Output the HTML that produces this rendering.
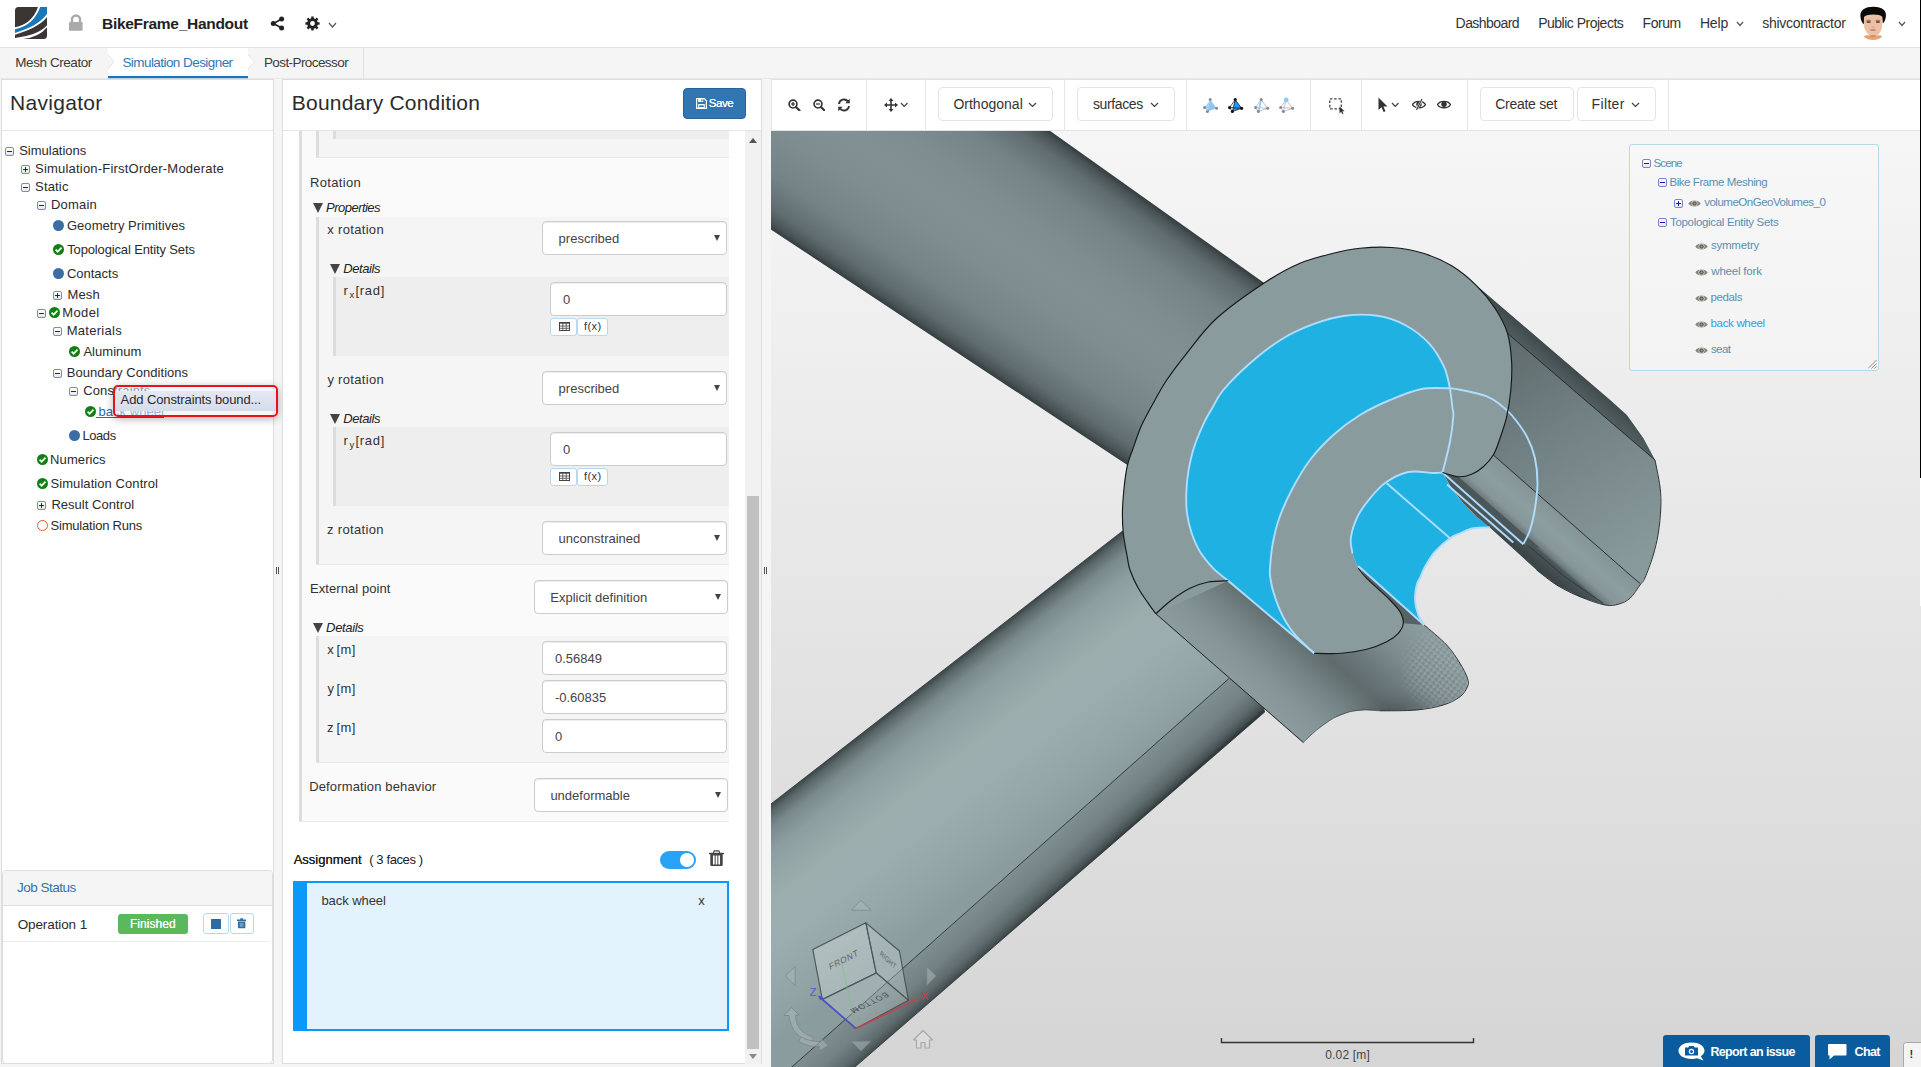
<!DOCTYPE html>
<html lang="en"><head><meta charset="utf-8"><title>BikeFrame_Handout - Simulation Designer</title>
<style>
*{box-sizing:border-box;margin:0;padding:0}
html,body{width:1921px;height:1067px;overflow:hidden;background:#f5f5f5;font-family:"Liberation Sans",sans-serif;font-size:13px;color:#333}
.t{position:absolute;white-space:nowrap;line-height:1;display:block}
.abs{position:absolute}
#top{position:absolute;left:0;top:0;width:1921px;height:48px;background:#fff;border-bottom:1px solid #e3e3e3}
#tabs{position:absolute;left:0;top:48px;width:1921px;height:31px;background:#f5f5f5;border-bottom:1px solid #e8e8e8}
.panel{position:absolute;background:#fff;border:1px solid #ddd}
.ex{position:absolute;width:9px;height:9px;border:1px solid #7f84c2;border-radius:2px;background:linear-gradient(#fff,#e6e6f4)}
.ex:before{content:"";position:absolute;left:1px;top:3px;width:5px;height:1.2px;background:#1515c8}
.ex.p:after{content:"";position:absolute;left:3px;top:1px;width:1.2px;height:5px;background:#1515c8}
.dot{position:absolute;width:11px;height:11px;border-radius:50%;background:#3a6ea5}
.ok{position:absolute;width:11px;height:11px}
.sel{position:absolute;height:34px;border:1px solid #ccc;border-radius:4px;background:#fff;box-shadow:inset 0 1px 1px rgba(0,0,0,.075)}
.sel:after{content:"";position:absolute;right:6px;top:13px;border:3.5px solid transparent;border-top:6px solid #444;border-bottom:0}
.inp{position:absolute;height:34px;border:1px solid #ccc;border-radius:4px;background:#fff;box-shadow:inset 0 1px 1px rgba(0,0,0,.075)}
.blk{position:absolute;border-left:3px solid #ddd}
.sbtn{position:absolute;height:18px;border:1px solid #b9d8ee;border-radius:3px;background:#fff}
.tri{position:absolute;width:0;height:0;border:5.7px solid transparent;border-top:10.3px solid #444;border-bottom:0}
.tbtn{position:absolute;top:87px;height:34px;border:1px solid #e4e4e4;border-radius:4px;background:#fff}
.vsep{position:absolute;top:79px;width:1px;height:52px;background:#e6e6e6}
</style></head>
<body>
<div id="top">
<svg class="abs" style="left:15px;top:6.8px" width="32" height="32" viewBox="0 0 32 32"><defs><clipPath id="lc"><path d="M3.5 0H32V28.5Q32 32 28.5 32H0V3.5Q0 0 3.5 0Z"/></clipPath></defs><g clip-path="url(#lc)"><rect width="32" height="32" fill="#3b3633"/><path d="M0 20.3Q17 17 23 0H32V10.1Q24 20.7 0 27.7Z" fill="#fff"/><path d="M0 22.3Q18.5 18.5 25.2 0H32V6.8Q24 18.8 0 25.9Z" fill="#1779ba"/><path d="M0 31Q24 27.6 32 18.2V20.3Q24 30.4 7.9 32H0Z" fill="#fff"/></g></svg>
<svg class="abs" style="left:68px;top:14px" width="16" height="18" viewBox="0 0 16 18"><path d="M4 8V5.5a4 4 0 0 1 8 0V8" fill="none" stroke="#aaa" stroke-width="2.4"/><rect x="1" y="8" width="13.6" height="8.8" rx=".8" fill="#aaa"/></svg>
<span class="t" style="left:102px;top:15.9px;font-size:15.5px;letter-spacing:-0.29px;color:#222;font-weight:bold;">BikeFrame_Handout</span>
<svg class="abs" style="left:270px;top:16px" width="15" height="15" viewBox="0 0 15 15"><path d="M11.5 3L3.5 7.5L11.5 12" fill="none" stroke="#222" stroke-width="1.6"/><circle cx="11.6" cy="3" r="2.5" fill="#222"/><circle cx="3.3" cy="7.5" r="2.5" fill="#222"/><circle cx="11.6" cy="12" r="2.5" fill="#222"/></svg>
<svg class="abs" style="left:305px;top:16px" width="15" height="15" viewBox="0 0 15 15"><path fill-rule="evenodd" d="M14.59 6.26L14.59 8.74L12.75 8.76L12.1 10.32L13.39 11.64L11.64 13.39L10.32 12.1L8.76 12.75L8.74 14.59L6.26 14.59L6.24 12.75L4.68 12.1L3.36 13.39L1.61 11.64L2.9 10.32L2.25 8.76L0.41 8.74L0.41 6.26L2.25 6.24L2.9 4.68L1.61 3.36L3.36 1.61L4.68 2.9L6.24 2.25L6.26 0.41L8.74 0.41L8.76 2.25L10.32 2.9L11.64 1.61L13.39 3.36L12.1 4.68L12.75 6.24ZM9.9 7.5A2.4 2.4 0 1 0 5.1 7.5A2.4 2.4 0 1 0 9.9 7.5Z" fill="#222"/></svg>
<svg class="abs" style="left:327.5px;top:21.5px" width="9" height="6" viewBox="-1 -1 9 6"><path d="M0 0L3.5 4L7 0" fill="none" stroke="#555" stroke-width="1.2"/></svg><span class="t" style="left:1455.6px;top:16.4px;font-size:14px;letter-spacing:-0.56px;color:#333;">Dashboard</span>
<span class="t" style="left:1538.2px;top:16.4px;font-size:14px;letter-spacing:-0.5px;color:#333;">Public Projects</span>
<span class="t" style="left:1642.6px;top:16.4px;font-size:14px;letter-spacing:-0.44px;color:#333;">Forum</span>
<span class="t" style="left:1699.9px;top:16.4px;font-size:14px;letter-spacing:-0.14px;color:#333;">Help</span>
<span class="t" style="left:1762.3px;top:16.4px;font-size:14px;letter-spacing:-0.28px;color:#333;">shivcontractor</span>
<svg class="abs" style="left:1736px;top:21px" width="8" height="5.5" viewBox="-1 -1 8 5.5"><path d="M0 0L3 3.5L6 0" fill="none" stroke="#555" stroke-width="1.2"/></svg><svg class="abs" style="left:1898px;top:21px" width="8" height="5.5" viewBox="-1 -1 8 5.5"><path d="M0 0L3 3.5L6 0" fill="none" stroke="#555" stroke-width="1.2"/></svg><svg class="abs" style="left:1850px;top:0" width="50" height="47" viewBox="0 0 50 47"><path d="M13.5 36.2C16 35.2 18 35 23 35.5C28 35 30 35.2 32.3 36.2C30 39 26 40 23 40C20 40 16 39 13.5 36.2Z" fill="#e9a070"/><path d="M13.8 16C15 12.5 31 12.5 32.4 16L32 27C31.5 31.5 28.5 35.8 23.3 37.2C18.5 35.8 15 31.5 14.2 27Z" fill="#ecc0a5"/><path d="M10.5 17C9.5 10 15 6.8 23.5 6.8C32 6.8 37 10.5 35.8 17C35.5 20 34 22.5 32.8 23.5L32.3 17C30 13.8 17 13.8 14 17L13.8 24.5C12 22.5 10.8 20 10.5 17Z" fill="#0c0a09"/><ellipse cx="18.6" cy="21.9" rx="2.3" ry="1" fill="#6a4a40"/><ellipse cx="27.9" cy="21.9" rx="2.3" ry="1" fill="#6a4a40"/><path d="M16.3 20.3H20.8M25.7 20.3H30.2" stroke="#7a5a4c" stroke-width=".7"/><ellipse cx="23" cy="27" rx="1.8" ry=".7" fill="#d7a68a"/><ellipse cx="22.9" cy="30" rx="3.2" ry=".9" fill="#c88a74"/><ellipse cx="23" cy="36" rx="3" ry="1" fill="#c98a64"/></svg>
<i class="abs" style="left:1920px;top:0;width:1px;height:48px;background:#000"></i></div>
<div id="tabs">
<svg class="abs" style="left:0;top:0" width="380" height="31" viewBox="0 0 380 31"><rect x="108" y="0" width="140" height="30" fill="#fff"/><path d="M107.5 7L114 13.8L107.5 21Z" fill="#f5f5f5"/><path d="M108 7L114 13.8L108 21" fill="none" stroke="#e6e6e6"/><path d="M247.5 7L254.5 13.8L247.5 21Z" fill="#fff"/><path d="M248 7L254.5 13.8L248 21" fill="none" stroke="#e6e6e6"/><rect x="108" y="28" width="140" height="2.2" fill="#1b75b6"/><rect x="363" y="0" width="1" height="30" fill="#e1e1e1"/></svg>
<span class="t" style="left:15.3px;top:7.6px;font-size:13.5px;letter-spacing:-0.43px;color:#3a3a3a;">Mesh Creator</span><span class="t" style="left:122.4px;top:7.6px;font-size:13.5px;letter-spacing:-0.56px;color:#2f78b4;">Simulation Designer</span><span class="t" style="left:263.9px;top:7.6px;font-size:13.5px;letter-spacing:-0.58px;color:#3a3a3a;">Post-Processor</span><i class="abs" style="left:1920px;top:0;width:1px;height:31px;background:#000"></i></div>
<div class="panel" style="left:1px;top:79px;width:273px;height:985px;border-color:#ddd"></div>
<div class="abs" style="left:2px;top:130px;width:271px;height:1px;background:#e5e5e5"></div>
<span class="t" style="left:9.9px;top:92px;font-size:21px;letter-spacing:0.32px;color:#2b2b2b;">Navigator</span>
<i class="ex" style="left:5px;top:147.1px"></i><span class="t" style="left:19.2px;top:143.9px;font-size:13px;letter-spacing:-0.01px;color:#2b2b2b;">Simulations</span>
<i class="ex p" style="left:21px;top:165.1px"></i><span class="t" style="left:35.1px;top:161.9px;font-size:13px;letter-spacing:0.2px;color:#2b2b2b;">Simulation-FirstOrder-Moderate</span>
<i class="ex" style="left:21px;top:183.1px"></i><span class="t" style="left:35.1px;top:179.9px;font-size:13px;letter-spacing:0.16px;color:#2b2b2b;">Static</span>
<i class="ex" style="left:37px;top:201.1px"></i><span class="t" style="left:51px;top:197.9px;font-size:13px;letter-spacing:0.2px;color:#2b2b2b;">Domain</span>
<i class="dot" style="left:53px;top:219.7px;background:#3a6ea5"></i><span class="t" style="left:66.9px;top:218.8px;font-size:13px;letter-spacing:0.06px;color:#2b2b2b;">Geometry Primitives</span>
<svg class="ok" style="left:53px;top:243.9px" viewBox="0 0 11 11"><circle cx="5.5" cy="5.5" r="5.5" fill="#127f12"/><path d="M2.6 5.7L4.7 7.7L8.5 3.7" fill="none" stroke="#fff" stroke-width="1.7"/></svg><span class="t" style="left:67.2px;top:243px;font-size:13px;letter-spacing:-0.14px;color:#2b2b2b;">Topological Entity Sets</span>
<i class="dot" style="left:53px;top:267.8px;background:#3a6ea5"></i><span class="t" style="left:66.9px;top:266.9px;font-size:13px;letter-spacing:-0px;color:#2b2b2b;">Contacts</span>
<i class="ex p" style="left:53px;top:291px"></i><span class="t" style="left:67.5px;top:287.8px;font-size:13px;letter-spacing:0.11px;color:#2b2b2b;">Mesh</span>
<i class="ex" style="left:37px;top:309.1px"></i><svg class="ok" style="left:49px;top:306.8px" viewBox="0 0 11 11"><circle cx="5.5" cy="5.5" r="5.5" fill="#127f12"/><path d="M2.6 5.7L4.7 7.7L8.5 3.7" fill="none" stroke="#fff" stroke-width="1.7"/></svg><span class="t" style="left:62.2px;top:305.9px;font-size:13px;letter-spacing:0.4px;color:#2b2b2b;">Model</span>
<i class="ex" style="left:53px;top:327.1px"></i><span class="t" style="left:66.7px;top:323.9px;font-size:13px;letter-spacing:0.28px;color:#2b2b2b;">Materials</span>
<svg class="ok" style="left:69px;top:345.7px" viewBox="0 0 11 11"><circle cx="5.5" cy="5.5" r="5.5" fill="#127f12"/><path d="M2.6 5.7L4.7 7.7L8.5 3.7" fill="none" stroke="#fff" stroke-width="1.7"/></svg><span class="t" style="left:83.4px;top:344.8px;font-size:13px;letter-spacing:0.03px;color:#2b2b2b;">Aluminum</span>
<i class="ex" style="left:53px;top:369px"></i><span class="t" style="left:66.7px;top:365.8px;font-size:13px;letter-spacing:0.04px;color:#2b2b2b;">Boundary Conditions</span>
<i class="ex" style="left:69px;top:387px"></i><span class="t" style="left:83.2px;top:383.8px;font-size:13px;letter-spacing:0.14px;color:#2b2b2b;">Constraints</span>
<svg class="ok" style="left:85px;top:405.5px" viewBox="0 0 11 11"><circle cx="5.5" cy="5.5" r="5.5" fill="#127f12"/><path d="M2.6 5.7L4.7 7.7L8.5 3.7" fill="none" stroke="#fff" stroke-width="1.7"/></svg><span class="t" style="left:98.5px;top:404.6px;font-size:13px;letter-spacing:0.05px;color:#2a6cae;">back wheel</span><div class="abs" style="left:96px;top:417.1px;width:67.5px;height:1px;background:#2a6cae"></div>
<i class="dot" style="left:69px;top:429.8px;background:#3a6ea5"></i><span class="t" style="left:82.5px;top:428.9px;font-size:13px;letter-spacing:-0.44px;color:#2b2b2b;">Loads</span>
<svg class="ok" style="left:37px;top:453.7px" viewBox="0 0 11 11"><circle cx="5.5" cy="5.5" r="5.5" fill="#127f12"/><path d="M2.6 5.7L4.7 7.7L8.5 3.7" fill="none" stroke="#fff" stroke-width="1.7"/></svg><span class="t" style="left:50.1px;top:452.8px;font-size:13px;letter-spacing:0.09px;color:#2b2b2b;">Numerics</span>
<svg class="ok" style="left:37px;top:477.7px" viewBox="0 0 11 11"><circle cx="5.5" cy="5.5" r="5.5" fill="#127f12"/><path d="M2.6 5.7L4.7 7.7L8.5 3.7" fill="none" stroke="#fff" stroke-width="1.7"/></svg><span class="t" style="left:50.5px;top:476.8px;font-size:13px;letter-spacing:0.07px;color:#2b2b2b;">Simulation Control</span>
<i class="ex p" style="left:37px;top:501px"></i><span class="t" style="left:51.4px;top:497.8px;font-size:13px;letter-spacing:0.03px;color:#2b2b2b;">Result Control</span>
<i class="dot" style="left:37px;top:519.7px;background:#fff;border:1.8px solid #dd5a26"></i><span class="t" style="left:50.5px;top:518.8px;font-size:13px;letter-spacing:-0.2px;color:#2b2b2b;">Simulation Runs</span>
<div class="abs" style="left:113px;top:384.5px;width:165px;height:32.5px;border:2px solid #e8121c;border-radius:5px;background:rgba(236,236,240,.55);box-shadow:0 2px 8px rgba(0,0,0,.3)"><div class="abs" style="left:0;top:4.5px;width:161px;height:19.5px;background:linear-gradient(#e4e8f4,#d7dceb)"></div></div>
<span class="t" style="left:120.6px;top:393.4px;font-size:13px;letter-spacing:-0.11px;color:#2b2b2b;">Add Constraints bound...</span>
<div class="abs" style="left:275.5px;top:567px;width:1px;height:7px;background:#555"></div><div class="abs" style="left:277.5px;top:567px;width:1px;height:7px;background:#555"></div>
<div class="abs" style="left:763.5px;top:567px;width:1px;height:7px;background:#555"></div><div class="abs" style="left:765.5px;top:567px;width:1px;height:7px;background:#555"></div>
<div class="abs" style="left:1.5px;top:869.5px;width:271.5px;height:194px;border:1px solid #ddd;border-radius:4px;background:#fff"><div style="height:35px;background:#f5f5f5;border-bottom:1px solid #ddd;border-radius:3px 3px 0 0"></div><div class="abs" style="left:0;top:37px;width:267px;height:34px;border-bottom:1px solid #eee"></div></div>
<span class="t" style="left:17.1px;top:881.1px;font-size:13.5px;letter-spacing:-0.51px;color:#3470a8;">Job Status</span>
<span class="t" style="left:17.7px;top:917.6px;font-size:13.5px;letter-spacing:-0.11px;color:#2b2b2b;">Operation 1</span>
<div class="abs" style="left:118px;top:914px;width:70px;height:20px;border-radius:3px;background:#5cb85c"></div><span class="t" style="left:130px;top:918px;font-size:12px;letter-spacing:0.04px;color:#fff;text-shadow:0 0 .5px #fff">Finished</span>
<div class="sbtn" style="left:203px;top:913px;width:25.5px;height:21px"><i class="abs" style="left:7px;top:4.5px;width:10px;height:10px;background:#2e6da4"></i></div><div class="sbtn" style="left:229.5px;top:913px;width:24.5px;height:21px"><svg class="abs" style="left:6.5px;top:4px" width="9.3" height="10.5" viewBox="0 0 10 11"><path d="M0 1.5H10V3H0ZM3.5 0H6.5V1.5H3.5ZM1 3.5H9V10.2Q9 11 8.2 11H1.8Q1 11 1 10.2Z" fill="#2e6da4"/><path d="M3.5 5V9.5M5 5V9.5M6.5 5V9.5" stroke="#9ec0df" stroke-width=".8"/></svg></div>
<div class="panel" style="left:282px;top:79px;width:480px;height:985px"></div>
<div class="abs" style="left:283px;top:130px;width:478px;height:1px;background:#e5e5e5"></div>
<span class="t" style="left:291.8px;top:92px;font-size:21px;letter-spacing:0.21px;color:#2b2b2b;">Boundary Condition</span>
<div class="abs" style="left:683px;top:88px;width:63px;height:31px;border-radius:4px;background:#3276b1;border:1px solid #2a6496"></div><svg class="abs" style="left:696px;top:98px" width="11" height="11" viewBox="0 0 11 11"><path d="M.6 .6H8.2L10.4 2.8V10.4H.6Z" fill="#3276b1" stroke="#fff" stroke-width="1.2"/><rect x="2.2" y="1" width="5" height="3" fill="#fff"/><rect x="5.2" y="1.4" width="1.2" height="2" fill="#3276b1"/><rect x="2.2" y="6" width="6.6" height="4" fill="#fff"/><rect x="3.2" y="7.4" width="4.6" height="1.6" fill="#3276b1"/></svg><span class="t" style="left:708.8px;top:98.1px;font-size:11.5px;letter-spacing:-0.42px;color:#fff;text-shadow:0 0 .4px #fff">Save</span>
<div class="abs" style="left:283px;top:131px;width:461px;height:933px;overflow:hidden">
<div class="abs" style="left:16px;top:0px;width:429.5px;height:690.5px;background:#fafafa;border-left:3px solid #ddd;border-bottom:1px solid #eaeaea"></div><div class="abs" style="left:33px;top:0px;width:412.5px;height:27px;background:#f5f5f5;border-left:3px solid #ddd;border-bottom:1px solid #e8e8e8"></div><div class="abs" style="left:50px;top:0px;width:395.5px;height:8px;background:#eee;border-left:3px solid #ddd"></div><div class="abs" style="left:33px;top:85.5px;width:412.5px;height:348px;background:#f5f5f5;border-left:3px solid #ddd;border-bottom:1px solid #e8e8e8"></div><div class="abs" style="left:50px;top:146px;width:395.5px;height:78.5px;background:#eee;border-left:3px solid #ddd"></div><div class="abs" style="left:50px;top:296px;width:395.5px;height:78.5px;background:#eee;border-left:3px solid #ddd"></div><div class="abs" style="left:33px;top:504.5px;width:412.5px;height:127px;background:#f5f5f5;border-left:3px solid #ddd;border-bottom:1px solid #e8e8e8"></div></div>
<span class="t" style="left:309.9px;top:176.3px;font-size:13px;letter-spacing:0.35px;color:#333;">Rotation</span><i class="tri" style="left:313px;top:203px"></i><span class="t" style="left:326.1px;top:201px;font-size:13px;letter-spacing:-0.53px;color:#222;font-style:italic;">Properties</span>
<span class="t" style="left:327.3px;top:222.5px;font-size:13px;letter-spacing:0.32px;color:#333;">x rotation</span><div class="sel" style="left:542px;top:221px;width:185px"></div><span class="t" style="left:558.6px;top:232.4px;font-size:13px;color:#444;">prescribed</span>
<i class="tri" style="left:330px;top:264px"></i><span class="t" style="left:343.2px;top:261.8px;font-size:13px;letter-spacing:-0.39px;color:#222;font-style:italic;">Details</span><span class="t" style="left:343.6px;top:284.3px;font-size:13px;color:#333;">r</span><span class="t" style="left:349.5px;top:290.3px;font-size:9.5px;color:#333;">x</span><span class="t" style="left:355.6px;top:284.3px;font-size:13px;letter-spacing:0.66px;color:#333;">[rad]</span><div class="inp" style="left:549.5px;top:282px;width:177px"></div><span class="t" style="left:562.9px;top:293.4px;font-size:13px;color:#444;">0</span><div class="sbtn" style="left:550px;top:318px;width:26.5px"><svg class="abs" style="left:7.5px;top:3px" width="11" height="9" viewBox="0 0 11 9"><rect x=".5" y=".5" width="10" height="8" fill="#fff" stroke="#444"/><path d="M.5 1.2H10.5" stroke="#444" stroke-width="1"/><path d="M.5 4H10.5M.5 6.3H10.5M3.8 1V8.5M7.2 1V8.5" stroke="#444" stroke-width=".8"/></svg></div><div class="sbtn" style="left:577px;top:318px;width:30.5px"></div><span class="t" style="left:583.9px;top:321.3px;font-size:11px;letter-spacing:0.46px;color:#333;">f(x)</span>
<span class="t" style="left:327.4px;top:372.5px;font-size:13px;letter-spacing:0.31px;color:#333;">y rotation</span><div class="sel" style="left:542px;top:371px;width:185px"></div><span class="t" style="left:558.6px;top:382.4px;font-size:13px;color:#444;">prescribed</span>
<i class="tri" style="left:330px;top:414px"></i><span class="t" style="left:343.2px;top:411.8px;font-size:13px;letter-spacing:-0.39px;color:#222;font-style:italic;">Details</span><span class="t" style="left:343.6px;top:434.3px;font-size:13px;color:#333;">r</span><span class="t" style="left:349.6px;top:440.3px;font-size:9.5px;color:#333;">y</span><span class="t" style="left:355.6px;top:434.3px;font-size:13px;letter-spacing:0.66px;color:#333;">[rad]</span><div class="inp" style="left:549.5px;top:432px;width:177px"></div><span class="t" style="left:562.9px;top:443.4px;font-size:13px;color:#444;">0</span><div class="sbtn" style="left:550px;top:468px;width:26.5px"><svg class="abs" style="left:7.5px;top:3px" width="11" height="9" viewBox="0 0 11 9"><rect x=".5" y=".5" width="10" height="8" fill="#fff" stroke="#444"/><path d="M.5 1.2H10.5" stroke="#444" stroke-width="1"/><path d="M.5 4H10.5M.5 6.3H10.5M3.8 1V8.5M7.2 1V8.5" stroke="#444" stroke-width=".8"/></svg></div><div class="sbtn" style="left:577px;top:468px;width:30.5px"></div><span class="t" style="left:583.9px;top:471.3px;font-size:11px;letter-spacing:0.46px;color:#333;">f(x)</span>
<span class="t" style="left:326.9px;top:522.5px;font-size:13px;letter-spacing:0.36px;color:#333;">z rotation</span><div class="sel" style="left:542px;top:521px;width:185px"></div><span class="t" style="left:558.6px;top:532.4px;font-size:13px;color:#444;">unconstrained</span>
<span class="t" style="left:309.9px;top:582px;font-size:13px;letter-spacing:0.08px;color:#333;">External point</span><div class="sel" style="left:534px;top:580px;width:194px"></div><span class="t" style="left:550.3px;top:591.4px;font-size:13px;color:#444;">Explicit definition</span>
<i class="tri" style="left:313px;top:622.5px"></i><span class="t" style="left:326.1px;top:620.9px;font-size:13px;letter-spacing:-0.35px;color:#222;font-style:italic;">Details</span>
<span class="t" style="left:327.3px;top:642.5px;font-size:13px;color:#333;">x</span><span class="t" style="left:336.6px;top:642.5px;font-size:13px;letter-spacing:0.31px;color:#333;">[m]</span><div class="inp" style="left:542px;top:641px;width:185px"></div><span class="t" style="left:555px;top:652.4px;font-size:13px;color:#444;">0.56849</span>
<span class="t" style="left:327.4px;top:681.5px;font-size:13px;color:#333;">y</span><span class="t" style="left:336.6px;top:681.5px;font-size:13px;letter-spacing:0.31px;color:#333;">[m]</span><div class="inp" style="left:542px;top:680px;width:185px"></div><span class="t" style="left:554.9px;top:691.4px;font-size:13px;color:#444;">-0.60835</span>
<span class="t" style="left:326.9px;top:720.5px;font-size:13px;color:#333;">z</span><span class="t" style="left:336.6px;top:720.5px;font-size:13px;letter-spacing:0.31px;color:#333;">[m]</span><div class="inp" style="left:542px;top:719px;width:185px"></div><span class="t" style="left:555px;top:730.4px;font-size:13px;color:#444;">0</span>
<span class="t" style="left:309.2px;top:779.9px;font-size:13px;letter-spacing:0.14px;color:#333;">Deformation behavior</span><div class="sel" style="left:534px;top:778px;width:194px"></div><span class="t" style="left:550.4px;top:789.4px;font-size:13px;color:#444;">undeformable</span>
<span class="t" style="left:293.7px;top:853px;font-size:13px;letter-spacing:-0.01px;color:#222;text-shadow:0 0 .6px #222">Assignment</span><span class="t" style="left:369.2px;top:853px;font-size:13px;letter-spacing:-0.39px;color:#222;">( 3 faces )</span>
<div class="abs" style="left:659.5px;top:850.5px;width:36.5px;height:18.5px;border-radius:10px;background:#2aa2f6"><i class="abs" style="left:20.5px;top:2.5px;width:13.5px;height:13.5px;border-radius:50%;background:#fff"></i></div><svg class="abs" style="left:709px;top:850px" width="15" height="17" viewBox="0 0 15 17"><path d="M4.2 3.4L5.2 .8H9.8L10.8 3.4" fill="none" stroke="#444" stroke-width="1.2"/><rect x="0" y="2.8" width="15" height="1.4" fill="#444"/><path d="M1.3 4.1H13.7V15Q13.7 16 12.7 16H2.3Q1.3 16 1.3 15Z" fill="#444"/><path d="M4.8 5.4V14.5M7.5 5.4V14.5M10.2 5.4V14.5" stroke="#fff" stroke-width="1.7"/></svg>
<div class="abs" style="left:293px;top:881px;width:436px;height:149.5px;border:2px solid #0a98fa;border-left-width:14px;background:#e3f3fd"></div><span class="t" style="left:321.4px;top:893.7px;font-size:13px;letter-spacing:-0.06px;color:#333;">back wheel</span><span class="t" style="left:698.3px;top:893.7px;font-size:13px;color:#333;">x</span>
<div class="abs" style="left:744.5px;top:131px;width:16.5px;height:933px;background:#f1f1f1"></div><div class="abs" style="left:746.5px;top:496px;width:12.5px;height:552.5px;background:#c1c1c1"></div><i class="abs" style="left:748.5px;top:138px;border:4px solid transparent;border-bottom:5px solid #555;border-top:0"></i><i class="abs" style="left:748.5px;top:1054px;border:4px solid transparent;border-top:5px solid #8a8a8a;border-bottom:0"></i>
<div class="abs" style="left:770.5px;top:78.5px;width:1151px;height:52.5px;background:#fff;border:1px solid #e3e3e3;border-right:0"></div><i class="abs" style="left:1920px;top:79px;width:1px;height:52px;background:#000"></i>
<svg class="abs" style="left:788px;top:98.5px" width="12.5" height="12.5" viewBox="0 0 13 13"><circle cx="5.2" cy="5.2" r="4.1" fill="none" stroke="#333" stroke-width="1.7"/><path d="M8.3 8.3L12 12" stroke="#333" stroke-width="2.2" stroke-linecap="round"/><path d="M3.2 5.2H7.2" stroke="#333" stroke-width="1.3"/><path d="M5.2 3.2V7.2" stroke="#333" stroke-width="1.3"/></svg><svg class="abs" style="left:812.5px;top:98.5px" width="12.5" height="12.5" viewBox="0 0 13 13"><circle cx="5.2" cy="5.2" r="4.1" fill="none" stroke="#333" stroke-width="1.7"/><path d="M8.3 8.3L12 12" stroke="#333" stroke-width="2.2" stroke-linecap="round"/><path d="M3.2 5.2H7.2" stroke="#333" stroke-width="1.3"/></svg><svg class="abs" style="left:836.5px;top:98px" width="14" height="14" viewBox="0 0 14 14"><path d="M2 6A5 5 0 0 1 11 3.5" fill="none" stroke="#333" stroke-width="1.9"/><path d="M12.8 .8V5.3H8.3Z" fill="#333"/><path d="M12 8A5 5 0 0 1 3 10.5" fill="none" stroke="#333" stroke-width="1.9"/><path d="M1.2 13.2V8.7H5.7Z" fill="#333"/></svg>
<i class="vsep" style="left:866px"></i><i class="vsep" style="left:925px"></i><i class="vsep" style="left:1064px"></i><i class="vsep" style="left:1186px"></i><i class="vsep" style="left:1310px"></i><i class="vsep" style="left:1361px"></i><i class="vsep" style="left:1467px"></i><i class="vsep" style="left:1668px"></i><svg class="abs" style="left:883.5px;top:98px" width="14" height="14" viewBox="0 0 14 14"><path d="M7 0L9.5 3H7.8V6.2H11V4.5L14 7L11 9.5V7.8H7.8V11H9.5L7 14L4.5 11H6.2V7.8H3V9.5L0 7L3 4.5V6.2H6.2V3H4.5Z" fill="#333"/></svg><svg class="abs" style="left:900px;top:101.5px" width="8.5" height="5.5" viewBox="-1 -1 8.5 5.5"><path d="M0 0L3.25 3.5L6.5 0" fill="none" stroke="#444" stroke-width="1.2"/></svg>
<div class="tbtn" style="left:938px;width:114.5px"></div><span class="t" style="left:953.4px;top:97.4px;font-size:14px;letter-spacing:0.01px;color:#333;">Orthogonal</span><svg class="abs" style="left:1028px;top:101.5px" width="9" height="5.5" viewBox="-1 -1 9 5.5"><path d="M0 0L3.5 3.5L7 0" fill="none" stroke="#444" stroke-width="1.2"/></svg>
<div class="tbtn" style="left:1077px;width:97.5px"></div><span class="t" style="left:1092.9px;top:97.4px;font-size:14px;letter-spacing:-0.37px;color:#333;">surfaces</span><svg class="abs" style="left:1149.5px;top:101.5px" width="9" height="5.5" viewBox="-1 -1 9 5.5"><path d="M0 0L3.5 3.5L7 0" fill="none" stroke="#444" stroke-width="1.2"/></svg>
<svg class="abs" style="left:1202px;top:96px" width="17" height="18" viewBox="-2 -2 17 18"><path d="M6.2 1.6L0.6 9.6L3.4 13.5Z" fill="#a8d4f5"/><path d="M6.2 1.6L3.4 13.5L12.6 10.3Z" fill="#8cc6f2"/><path d="M0.6 9.6L12.6 10.3" stroke="#b5b5b5" stroke-width=".6" stroke-dasharray="1 1"/><circle cx="6.2" cy="1.6" r="1.5" fill="#8a8a8a"/><circle cx="0.6" cy="9.6" r="1.5" fill="#8a8a8a"/><circle cx="12.6" cy="10.3" r="1.5" fill="#8a8a8a"/><circle cx="3.4" cy="13.5" r="1.5" fill="#8a8a8a"/></svg><svg class="abs" style="left:1227px;top:96px" width="17" height="18" viewBox="-2 -2 17 18"><path d="M6.2 1.6L3.4 13.5L12.6 10.3Z" fill="#2196f3"/><path d="M6.2 1.6L0.6 9.6L3.4 13.5L12.6 10.3L6.2 1.6L3.4 13.5M0.6 9.6L12.6 10.3" fill="none" stroke="#111" stroke-width=".7"/><circle cx="6.2" cy="1.6" r="1.6" fill="#111"/><circle cx="0.6" cy="9.6" r="1.6" fill="#111"/><circle cx="12.6" cy="10.3" r="1.6" fill="#111"/><circle cx="3.4" cy="13.5" r="1.6" fill="#111"/></svg><svg class="abs" style="left:1253px;top:96px" width="17" height="18" viewBox="-2 -2 17 18"><path d="M6.2 1.6L0.6 9.6L3.4 13.5L12.6 10.3L6.2 1.6M0.6 9.6L12.6 10.3" fill="none" stroke="#999" stroke-width=".6"/><path d="M6.2 1.6L3.4 13.5" stroke="#90caf9" stroke-width="1.8"/><circle cx="6.2" cy="1.6" r="1.5" fill="#8a8a8a"/><circle cx="0.6" cy="9.6" r="1.5" fill="#8a8a8a"/><circle cx="12.6" cy="10.3" r="1.5" fill="#8a8a8a"/><circle cx="3.4" cy="13.5" r="1.5" fill="#8a8a8a"/></svg><svg class="abs" style="left:1278px;top:96px" width="17" height="18" viewBox="-2 -2 17 18"><path d="M6.2 1.6L0.6 9.6L3.4 13.5L12.6 10.3L6.2 1.6L3.4 13.5M0.6 9.6L12.6 10.3" fill="none" stroke="#999" stroke-width=".6"/><circle cx="0.6" cy="9.6" r="1.5" fill="#8a8a8a"/><circle cx="12.6" cy="10.3" r="1.5" fill="#8a8a8a"/><circle cx="3.4" cy="13.5" r="1.5" fill="#8a8a8a"/><circle cx="6.2" cy="2" r="2.4" fill="#90caf9"/></svg>
<svg class="abs" style="left:1328.5px;top:98px" width="17" height="17" viewBox="0 0 17 17"><rect x=".8" y=".8" width="11.5" height="10" fill="none" stroke="#444" stroke-width="1.3" stroke-dasharray="2.6 1.7"/><path d="M10.5 8.5V15.5L12.2 13.8L13.3 16.3L14.4 15.8L13.3 13.3H15.6Z" fill="#333"/></svg>
<svg class="abs" style="left:1378px;top:96.5px" width="10" height="16" viewBox="0 0 10 16"><path d="M.5 .5V13L3.5 10.2L5.6 15L7.5 14.2L5.4 9.5H9.5Z" fill="#333"/></svg><svg class="abs" style="left:1391px;top:101.5px" width="8.5" height="5.5" viewBox="-1 -1 8.5 5.5"><path d="M0 0L3.25 3.5L6.5 0" fill="none" stroke="#444" stroke-width="1.2"/></svg><svg class="abs" style="left:1411.5px;top:99px" width="14" height="11" viewBox="0 0 14 11"><path d="M.5 5.5C3 1.2 11 1.2 13.5 5.5C11 9.8 3 9.8 .5 5.5Z" fill="none" stroke="#333" stroke-width="1.3"/><circle cx="7" cy="5.2" r="2.7" fill="#333"/><path d="M10.5 -.5L4 11.5" stroke="#fff" stroke-width="2.2"/><path d="M10 0L4.5 11" stroke="#333" stroke-width="1.1"/></svg><svg class="abs" style="left:1436.5px;top:99px" width="14" height="11" viewBox="0 0 14 11"><path d="M.5 5.5C3 1.2 11 1.2 13.5 5.5C11 9.8 3 9.8 .5 5.5Z" fill="none" stroke="#333" stroke-width="1.3"/><circle cx="7" cy="5.2" r="2.7" fill="#333"/></svg>
<div class="tbtn" style="left:1480px;width:93.5px"></div><span class="t" style="left:1495.2px;top:97.4px;font-size:14px;letter-spacing:-0.27px;color:#333;">Create set</span><div class="tbtn" style="left:1577px;width:79px"></div><span class="t" style="left:1591.6px;top:97.4px;font-size:14px;letter-spacing:0.34px;color:#333;">Filter</span><svg class="abs" style="left:1631px;top:101.5px" width="9" height="5.5" viewBox="-1 -1 9 5.5"><path d="M0 0L3.5 3.5L7 0" fill="none" stroke="#444" stroke-width="1.2"/></svg>
<svg class="abs" style="left:771px;top:131px" width="1150" height="936" viewBox="771 131 1150 936">
<defs>
<linearGradient id="bg" x1="0" y1="0" x2="0" y2="1"><stop offset="0" stop-color="#f6f6f6"/><stop offset="1" stop-color="#d5d5d5"/></linearGradient>
<linearGradient id="g1" gradientUnits="userSpaceOnUse" x1="1048.7" y1="130" x2="981.5" y2="224.5"><stop offset="0" stop-color="#333c3e"/><stop offset=".05" stop-color="#495355"/><stop offset=".16" stop-color="#606d70"/><stop offset=".4" stop-color="#738386"/><stop offset=".75" stop-color="#7d8d90"/><stop offset="1" stop-color="#809093"/></linearGradient>
<linearGradient id="g1b" gradientUnits="userSpaceOnUse" x1="900" y1="314.8" x2="964" y2="218"><stop offset="0" stop-color="#333c3e"/><stop offset=".05" stop-color="#495355"/><stop offset=".16" stop-color="#606d70"/><stop offset=".4" stop-color="#738386"/><stop offset=".75" stop-color="#7d8d90"/><stop offset="1" stop-color="#809093"/></linearGradient>
<linearGradient id="g3" gradientUnits="userSpaceOnUse" x1="1000" y1="626.1" x2="1117.9" y2="778.1"><stop offset="0" stop-color="#3b4547"/><stop offset=".035" stop-color="#5a6769"/><stop offset=".1" stop-color="#7a8a8c"/><stop offset=".2" stop-color="#8d9ea0"/><stop offset=".4" stop-color="#9baead"/><stop offset=".6" stop-color="#9cadaf"/><stop offset=".85" stop-color="#93a4a6"/><stop offset="1" stop-color="#8b9c9e"/></linearGradient>
<linearGradient id="g3b" gradientUnits="userSpaceOnUse" x1="1100" y1="794.1" x2="1130.3" y2="828.5"><stop offset="0" stop-color="#7e8e91"/><stop offset=".45" stop-color="#728184"/><stop offset=".75" stop-color="#5e6b6d"/><stop offset=".92" stop-color="#465052"/><stop offset="1" stop-color="#2f3739"/></linearGradient>
<linearGradient id="g2a" gradientUnits="userSpaceOnUse" x1="1560" y1="345" x2="1534" y2="376"><stop offset="0" stop-color="#353e40"/><stop offset=".45" stop-color="#4a5557"/><stop offset="1" stop-color="#5f6b6e"/></linearGradient>
<linearGradient id="g2b" gradientUnits="userSpaceOnUse" x1="1510" y1="340" x2="1640" y2="560"><stop offset="0" stop-color="#5f6c6e"/><stop offset=".4" stop-color="#718083"/><stop offset=".75" stop-color="#7f8f92"/><stop offset="1" stop-color="#889a9c"/></linearGradient>
<linearGradient id="g2c" gradientUnits="userSpaceOnUse" x1="1560" y1="510" x2="1515" y2="562"><stop offset="0" stop-color="#849496"/><stop offset=".3" stop-color="#8d9ea0"/><stop offset=".5" stop-color="#879799"/><stop offset=".6" stop-color="#6f7c7f"/><stop offset=".645" stop-color="#4b5557"/><stop offset=".82" stop-color="#3c4547"/><stop offset="1" stop-color="#3c4547"/></linearGradient>
<linearGradient id="gs" gradientUnits="userSpaceOnUse" x1="1250" y1="696" x2="1355" y2="575"><stop offset="0" stop-color="#8c9c9e"/><stop offset=".15" stop-color="#859597"/><stop offset=".32" stop-color="#748385"/><stop offset=".5" stop-color="#5f6b6d"/><stop offset=".62" stop-color="#6a777a"/><stop offset=".8" stop-color="#7d8c8e"/><stop offset="1" stop-color="#8b9b9d"/></linearGradient>
<radialGradient id="gl" gradientUnits="userSpaceOnUse" cx="1392" cy="716" r="52" gradientTransform="translate(1392 716) rotate(-8) scale(1 .55) translate(-1392 -716)"><stop offset="0" stop-color="#384143" stop-opacity=".6"/><stop offset=".45" stop-color="#465052" stop-opacity=".3"/><stop offset="1" stop-color="#5c686a" stop-opacity="0"/></radialGradient>
<pattern id="tes" width="5" height="4.4" patternUnits="userSpaceOnUse" patternTransform="rotate(38)"><path d="M0 0L5 0L2.5 4.4Z" fill="#a0b1b3" opacity=".6"/><path d="M0 0L2.5 4.4L-2.5 4.4ZM5 0L7.5 4.4L2.5 4.4Z" fill="#5a6668" opacity=".15"/></pattern>
<radialGradient id="tesm" gradientUnits="userSpaceOnUse" cx="1445" cy="668" r="48"><stop offset="0" stop-color="#fff"/><stop offset=".55" stop-color="#fff" stop-opacity=".8"/><stop offset="1" stop-color="#fff" stop-opacity="0"/></radialGradient><mask id="tmk"><rect x="1350" y="600" width="140" height="120" fill="url(#tesm)"/></mask>
</defs>
<rect x="771" y="131" width="1150" height="936" fill="url(#bg)"/>
<path d="M1476.7 285.8L1610 400L1626.7 415L1643.3 438.3L1655 460L1660 486.7L1660.8 508.3L1658.3 533.3L1653.3 555L1645 577.8L1640 585L1630 598.3L1618.3 604.2L1605 605L1580 596.7L1556.7 585L1536.7 570L1490 527.5L1442.5 472.5L1400 380Z" fill="url(#g2b)"/>
<path d="M1476.7 285.8L1610 400L1626.7 415L1643.3 438.3L1655 460L1585 400L1507.5 333.3Z" fill="url(#g2a)"/>
<path d="M1493.3 455L1633.3 577.8L1640 583.3L1630 598.3L1618.3 604.2L1605 605L1580 596.7L1556.7 585L1536.7 570L1490 527.5L1442.5 472.5L1460 476Z" fill="url(#g2c)"/>
<path d="M1507.5 333.3L1585 400L1655 460" fill="none" stroke="#1d2425" stroke-width=".9"/>
<path d="M1493.3 455L1633.3 577.8L1640 583.3" fill="none" stroke="#1d2425" stroke-width=".9"/>
<path d="M1452 481L1565 577L1603.3 603.3" fill="none" stroke="#2a3234" stroke-width=".8"/>
<path d="M1655 460C1655.8 464.4 1659 478.6 1660 486.7C1661 494.8 1661.1 500.5 1660.8 508.3C1660.5 516.1 1659.5 525.5 1658.3 533.3C1657 541.1 1655.5 547.6 1653.3 555C1651.1 562.4 1647.2 572.8 1645 577.8C1642.8 582.8 1642.5 581.6 1640 585C1637.5 588.4 1633.6 595.1 1630 598.3C1626.4 601.5 1622.5 603.1 1618.3 604.2C1614.1 605.3 1611.4 606.2 1605 605C1598.6 603.8 1588 600 1580 596.7C1572 593.4 1563.9 589.5 1556.7 585C1549.5 580.5 1540 572.5 1536.7 570" fill="none" stroke="#1d2425" stroke-width=".9"/>
<path d="M770 130L1048.8 130L1264.2 283L1300 400L1127.5 465L770 228.8Z" fill="url(#g1)"/>
<path d="M770 80.1L1264 419.4L1200 470L1127.5 465L770 228.8Z" fill="url(#g1b)"/>
<path d="M1122.7 530.9L770 804.7L770 1068L790.7 1068L1205 700L1229 678.5L1160 600Z" fill="url(#g3)"/>
<path d="M1229 678.5L790.7 1068L853.8 1068L1265 711.7L1262 700L1232 670Z" fill="url(#g3b)"/>
<path d="M1229 678.5L790.7 1068" stroke="#1a2021" stroke-width=".8"/>
<path d="M1122.7 530.9L770 804.7" stroke="#2a3234" stroke-width=".8"/><path d="M1265 711.7L853.8 1068" stroke="#2a3234" stroke-width=".8"/>
<path d="M1155.8 613.7L1171.7 600L1190 588.3L1208.3 582L1228.3 580.8L1314.2 653.3L1341.7 653.3L1366.7 649.2L1386.7 641.7L1398.3 633.3L1403.3 623.3L1400 611.7L1390 600L1366.7 578.3L1358.3 568L1424.2 625L1446.7 645L1460 663.3L1467.5 678.3L1467.5 686.7L1460 696.7L1443.3 705L1416.7 710L1380 710.8L1365 710L1350 711.7L1333.3 718.3L1316.7 730L1303.3 742.5Z" fill="url(#gs)"/>
<path d="M1155.8 613.7L1171.7 600L1190 588.3L1208.3 582L1228.3 580.8L1314.2 653.3L1341.7 653.3L1366.7 649.2L1386.7 641.7L1398.3 633.3L1403.3 623.3L1400 611.7L1390 600L1366.7 578.3L1358.3 568L1424.2 625L1446.7 645L1460 663.3L1467.5 678.3L1467.5 686.7L1460 696.7L1443.3 705L1416.7 710L1380 710.8L1365 710L1350 711.7L1333.3 718.3L1316.7 730L1303.3 742.5Z" fill="url(#gl)"/>
<path d="M1155.8 613.7L1171.7 600L1190 588.3L1208.3 582L1228.3 580.8L1314.2 653.3L1341.7 653.3L1366.7 649.2L1386.7 641.7L1398.3 633.3L1403.3 623.3L1400 611.7L1390 600L1366.7 578.3L1358.3 568L1424.2 625L1446.7 645L1460 663.3L1467.5 678.3L1467.5 686.7L1460 696.7L1443.3 705L1416.7 710L1380 710.8L1365 710L1350 711.7L1333.3 718.3L1316.7 730L1303.3 742.5Z" fill="url(#tes)" mask="url(#tmk)"/>
<path d="M1358.3 566L1424.2 625L1403.3 623.3L1400 611.7L1390 600L1366.7 578.3Z" fill="#566264"/>
<path d="M1424.2 625C1428 628.3 1440.7 638.6 1446.7 645C1452.7 651.4 1456.5 657.8 1460 663.3C1463.5 668.8 1466.2 674.4 1467.5 678.3C1468.8 682.2 1468.8 683.6 1467.5 686.7C1466.2 689.8 1464 693.7 1460 696.7C1456 699.8 1450.5 702.8 1443.3 705C1436.1 707.2 1427.2 709 1416.7 710C1406.2 711 1386.1 710.7 1380 710.8" fill="none" stroke="#1d2425" stroke-width=".9"/>
<path d="M1380 710.8C1377.5 710.7 1370 709.9 1365 710C1360 710.1 1355.3 710.3 1350 711.7C1344.7 713.1 1338.8 715.2 1333.3 718.3C1327.8 721.3 1321.7 726 1316.7 730C1311.7 734 1305.5 740.4 1303.3 742.5" fill="none" stroke="#333c3e" stroke-width=".6"/>
<path d="M1155.8 613.7L1303.3 742.5" stroke="#1a2021" stroke-width="1"/>
<path d="M1155.8 613.7C1154.5 612 1151.2 607.5 1148.3 603.3C1145.4 599.1 1141.3 593.8 1138.3 588.3C1135.2 582.8 1131.8 575 1130 570C1128.2 565 1128.6 564.4 1127.5 558.3C1126.4 552.2 1124.1 541.3 1123.3 533.3C1122.5 525.2 1122.3 517.8 1122.5 510C1122.7 502.2 1123.4 494.2 1124.2 486.7C1125 479.2 1126.1 471.1 1127.5 465C1128.9 458.9 1130.1 456.7 1132.5 450C1134.9 443.3 1138 433.3 1141.7 425C1145.5 416.7 1150.8 407.5 1155 400C1159.2 392.5 1161.4 387.8 1166.7 380C1172 372.2 1178.4 363.6 1186.7 353.3C1195 343 1203.8 330 1216.7 318.3C1229.6 306.6 1250.3 292.2 1264.2 283C1278.1 273.8 1288.5 268.2 1300 263.3C1311.5 258.4 1323.3 255.8 1333.3 253.3C1343.3 250.8 1350.3 249.3 1360 248.3C1369.7 247.3 1381.2 246.7 1391.7 247.5C1402.2 248.3 1413.3 250.2 1423.3 253.3C1433.3 256.4 1442.8 260.4 1451.7 265.8C1460.6 271.2 1469.5 278.7 1476.7 285.8C1483.9 292.9 1489.9 300.4 1495 308.3C1500.1 316.2 1504.7 324.1 1507.5 333.3C1510.3 342.5 1511.2 353.9 1511.7 363.3C1512.2 372.8 1511.6 381.1 1510.8 390C1510 398.9 1508.5 408.6 1506.7 416.7C1504.9 424.8 1502.2 431.9 1500 438.3C1497.8 444.7 1496.1 450.3 1493.3 455C1490.5 459.7 1486.9 463.5 1483.3 466.7C1479.7 469.9 1475.9 472.5 1471.7 474.2C1467.5 475.9 1463.2 477 1458.3 476.7C1453.4 476.4 1445.1 473.2 1442.5 472.5L1228.3 580.8Z" fill="#8a9b9d"/>
<path d="M1155.8 613.7L1171.7 600L1190 588.3L1208.3 582L1228.3 580.8L1250 600L1200 560Z" fill="#8a9b9d"/>
<path d="M1450 388.3C1449 384.7 1447.5 374.2 1444 366.7C1440.5 359.2 1435.5 350.2 1429 343.3C1422.5 336.4 1413.6 329.6 1405 325C1396.4 320.4 1387.5 317.3 1377.5 315.8C1367.5 314.3 1355.7 314.4 1345 315.8C1334.3 317.2 1323.8 320.3 1313.3 324.2C1302.8 328.1 1292.2 332.7 1281.7 339.2C1271.2 345.7 1259.7 354.8 1250 363.3C1240.3 371.8 1229.6 382.6 1223.3 390C1217 397.4 1215.4 402.7 1212.3 408C1209.2 413.3 1207.6 415.2 1204.6 421.7C1201.6 428.1 1196.9 438.4 1194.2 446.7C1191.5 455 1189.6 463.9 1188.3 471.7C1187 479.5 1186.5 486.4 1186.3 493.3C1186.1 500.2 1186.1 506.6 1187 513.3C1187.9 520 1189.5 526.9 1191.7 533.3C1193.9 539.7 1196.4 545.9 1200 551.7C1203.6 557.5 1208.6 563.4 1213.3 568.3C1218 573.1 1225.8 578.7 1228.3 580.8L1314.2 653.3L1314.2 653.3C1311.3 650.5 1301.3 641.7 1296.7 636.7C1292.1 631.7 1289.6 628 1286.7 623.3C1283.8 618.6 1281.4 613.6 1279.2 608.3C1277 603 1274.8 596.8 1273.3 591.7C1271.8 586.6 1270.8 581.7 1270.3 577.8C1269.8 573.9 1269.6 573.8 1270 568.3C1270.4 562.8 1271 553.3 1272.5 545C1274 536.7 1276 527.5 1279.2 518.3C1282.4 509.1 1286.6 499.7 1291.7 490C1296.8 480.3 1303.1 469.2 1310 460C1316.9 450.8 1325 442.5 1333.3 435C1341.6 427.5 1350.5 420.8 1360 415C1369.5 409.2 1379.7 404.3 1390 400C1400.3 395.7 1411.7 390.9 1421.7 389C1431.7 387.1 1445.3 388.4 1450 388.3Z" fill="#20b1e3"/>
<path d="M1450 388.3C1445.3 388.4 1431.7 387.1 1421.7 389C1411.7 390.9 1400.3 395.7 1390 400C1379.7 404.3 1369.5 409.2 1360 415C1350.5 420.8 1341.6 427.5 1333.3 435C1325 442.5 1316.9 450.8 1310 460C1303.1 469.2 1296.8 480.3 1291.7 490C1286.6 499.7 1282.4 509.1 1279.2 518.3C1276 527.5 1274 536.7 1272.5 545C1271 553.3 1270.4 562.8 1270 568.3C1269.6 573.8 1269.8 573.9 1270.3 577.8C1270.8 581.7 1271.8 586.6 1273.3 591.7C1274.8 596.8 1277 603 1279.2 608.3C1281.4 613.6 1283.8 618.6 1286.7 623.3C1289.6 628 1292.1 631.7 1296.7 636.7C1301.3 641.7 1311.3 650.5 1314.2 653.3L1314.2 653.3C1318.8 653.3 1333 654 1341.7 653.3C1350.5 652.6 1359.2 651.1 1366.7 649.2C1374.2 647.3 1381.4 644.4 1386.7 641.7C1392 639.1 1395.5 636.4 1398.3 633.3C1401.1 630.2 1403 626.9 1403.3 623.3C1403.6 619.7 1402.2 615.6 1400 611.7C1397.8 607.8 1395.5 605.6 1390 600C1384.5 594.4 1372 583.6 1366.7 578.3C1361.4 573 1359.7 569.7 1358.3 568L1358.3 568C1357.3 565.5 1353.8 558.2 1352.5 553.3C1351.2 548.3 1350 544.4 1350.8 538.3C1351.6 532.2 1354.3 523.4 1357.5 516.7C1360.7 510 1365.3 504 1370 498.3C1374.7 492.6 1379.4 486.9 1385.8 482.5C1392.2 478.1 1400.4 473.6 1408.3 472C1416.2 470.4 1427.6 472.9 1433.3 473C1439 473.1 1441 472.6 1442.5 472.5L1442.5 472.5C1443.8 467.4 1448.2 451 1450 441.7C1451.8 432.4 1452.9 422.3 1453.3 416.7C1453.7 411.1 1453 412.7 1452.5 408C1452 403.3 1450.4 391.6 1450 388.3Z" fill="#8a9b9d"/>
<path d="M1358.3 568C1357.3 565.5 1353.8 558.2 1352.5 553.3C1351.2 548.3 1350 544.4 1350.8 538.3C1351.6 532.2 1354.3 523.4 1357.5 516.7C1360.7 510 1365.3 504 1370 498.3C1374.7 492.6 1379.4 486.9 1385.8 482.5C1392.2 478.1 1400.4 473.6 1408.3 472C1416.2 470.4 1427.6 472.9 1433.3 473C1439 473.1 1441 472.6 1442.5 472.5L1442.5 472.5C1444.3 475.6 1449.8 485.7 1453.3 490.8C1456.8 495.9 1459.4 499 1463.3 503.3C1467.2 507.6 1472.2 512.8 1476.7 516.7C1481.2 520.6 1487.8 525 1490 526.7L1490 527.5C1487.2 527.6 1478.3 527.3 1473.3 528.3C1468.3 529.3 1463.9 531.6 1460 533.3C1456.1 535 1454.2 535.2 1450 538.3C1445.8 541.4 1439.2 547 1435 551.7C1430.8 556.4 1427.5 562.4 1425 566.7C1422.5 571.1 1421.4 574.8 1420 577.8C1418.6 580.8 1417.5 581.3 1416.7 585C1415.9 588.7 1414.7 595 1415 600C1415.3 605 1416.8 610.8 1418.3 615C1419.8 619.2 1423.2 623.3 1424.2 625L1358.3 566Z" fill="#20b1e3"/>
<path d="M1442.5 472.5L1458.3 476.7L1540 548L1523 544L1490 527.5L1476.7 516.7L1463.3 503.3L1453.3 490.8Z" fill="#4b5658"/>
<g fill="none" stroke="#aeddff" stroke-width="1.9" stroke-linejoin="round"><path d="M1450 388.3C1449 384.7 1447.5 374.2 1444 366.7C1440.5 359.2 1435.5 350.2 1429 343.3C1422.5 336.4 1413.6 329.6 1405 325C1396.4 320.4 1387.5 317.3 1377.5 315.8C1367.5 314.3 1355.7 314.4 1345 315.8C1334.3 317.2 1323.8 320.3 1313.3 324.2C1302.8 328.1 1292.2 332.7 1281.7 339.2C1271.2 345.7 1259.7 354.8 1250 363.3C1240.3 371.8 1229.6 382.6 1223.3 390C1217 397.4 1215.4 402.7 1212.3 408C1209.2 413.3 1207.6 415.2 1204.6 421.7C1201.6 428.1 1196.9 438.4 1194.2 446.7C1191.5 455 1189.6 463.9 1188.3 471.7C1187 479.5 1186.5 486.4 1186.3 493.3C1186.1 500.2 1186.1 506.6 1187 513.3C1187.9 520 1189.5 526.9 1191.7 533.3C1193.9 539.7 1196.4 545.9 1200 551.7C1203.6 557.5 1208.6 563.4 1213.3 568.3C1218 573.1 1225.8 578.7 1228.3 580.8L1314.2 653.3"/><path d="M1314.2 653.3C1311.3 650.5 1301.3 641.7 1296.7 636.7C1292.1 631.7 1289.6 628 1286.7 623.3C1283.8 618.6 1281.4 613.6 1279.2 608.3C1277 603 1274.8 596.8 1273.3 591.7C1271.8 586.6 1270.8 581.7 1270.3 577.8C1269.8 573.9 1269.6 573.8 1270 568.3C1270.4 562.8 1271 553.3 1272.5 545C1274 536.7 1276 527.5 1279.2 518.3C1282.4 509.1 1286.6 499.7 1291.7 490C1296.8 480.3 1303.1 469.2 1310 460C1316.9 450.8 1325 442.5 1333.3 435C1341.6 427.5 1350.5 420.8 1360 415C1369.5 409.2 1379.7 404.3 1390 400C1400.3 395.7 1411.7 390.9 1421.7 389C1431.7 387.1 1445.3 388.4 1450 388.3"/><path d="M1450 388.3C1450.4 391.6 1452 403.3 1452.5 408C1453 412.7 1453.7 411.1 1453.3 416.7C1452.9 422.3 1451.8 432.4 1450 441.7C1448.2 451 1443.8 467.4 1442.5 472.5"/><path d="M1450 388.3C1451.7 388.5 1454 388.4 1460 389.7C1466 391 1479.5 393.7 1486.2 396.2C1492.9 398.7 1495.7 401.3 1500 404.5C1504.3 407.7 1507.5 410.1 1512 415.5C1516.5 420.9 1523.4 430.1 1527.2 437.2C1531 444.3 1533.3 450.6 1535 458.3C1536.7 466 1537.5 475 1537.5 483.3C1537.5 491.6 1536.2 500.5 1535 508.3C1533.8 516.1 1532 524 1530 530C1528 536 1524.4 541.8 1523.3 544.2"/><path d="M1523.3 544.2L1442.5 472.5"/><path d="M1513.3 542.5L1447 484.5"/><path d="M1352.5 553.3C1352.2 550.8 1350 544.4 1350.8 538.3C1351.6 532.2 1354.3 523.4 1357.5 516.7C1360.7 510 1365.3 504 1370 498.3C1374.7 492.6 1379.4 486.9 1385.8 482.5C1392.2 478.1 1400.4 473.6 1408.3 472C1416.2 470.4 1427.6 472.9 1433.3 473C1439 473.1 1441 472.6 1442.5 472.5"/><path d="M1490 527.5C1487.2 527.6 1478.3 527.3 1473.3 528.3C1468.3 529.3 1463.9 531.6 1460 533.3C1456.1 535 1454.2 535.2 1450 538.3C1445.8 541.4 1439.2 547 1435 551.7C1430.8 556.4 1427.5 562.4 1425 566.7C1422.5 571.1 1421.4 574.8 1420 577.8C1418.6 580.8 1417.5 581.3 1416.7 585C1415.9 588.7 1414.7 595 1415 600C1415.3 605 1416.8 610.8 1418.3 615C1419.8 619.2 1423.2 623.3 1424.2 625"/><path d="M1386.7 483.3L1450 538.3"/><path d="M1358.3 566L1424.2 625"/></g>
<g fill="none" stroke="#14191a" stroke-width="1.15"><path d="M1155.8 613.7C1154.5 612 1151.2 607.5 1148.3 603.3C1145.4 599.1 1141.3 593.8 1138.3 588.3C1135.2 582.8 1131.8 575 1130 570C1128.2 565 1128.6 564.4 1127.5 558.3C1126.4 552.2 1124.1 541.3 1123.3 533.3C1122.5 525.2 1122.3 517.8 1122.5 510C1122.7 502.2 1123.4 494.2 1124.2 486.7C1125 479.2 1126.1 471.1 1127.5 465C1128.9 458.9 1130.1 456.7 1132.5 450C1134.9 443.3 1138 433.3 1141.7 425C1145.5 416.7 1150.8 407.5 1155 400C1159.2 392.5 1161.4 387.8 1166.7 380C1172 372.2 1178.4 363.6 1186.7 353.3C1195 343 1203.8 330 1216.7 318.3C1229.6 306.6 1250.3 292.2 1264.2 283C1278.1 273.8 1288.5 268.2 1300 263.3C1311.5 258.4 1323.3 255.8 1333.3 253.3C1343.3 250.8 1350.3 249.3 1360 248.3C1369.7 247.3 1381.2 246.7 1391.7 247.5C1402.2 248.3 1413.3 250.2 1423.3 253.3C1433.3 256.4 1442.8 260.4 1451.7 265.8C1460.6 271.2 1469.5 278.7 1476.7 285.8C1483.9 292.9 1489.9 300.4 1495 308.3C1500.1 316.2 1504.7 324.1 1507.5 333.3C1510.3 342.5 1511.2 353.9 1511.7 363.3C1512.2 372.8 1511.6 381.1 1510.8 390C1510 398.9 1508.5 408.6 1506.7 416.7C1504.9 424.8 1502.2 431.9 1500 438.3C1497.8 444.7 1496.1 450.3 1493.3 455C1490.5 459.7 1486.9 463.5 1483.3 466.7C1479.7 469.9 1475.9 472.5 1471.7 474.2C1467.5 475.9 1463.2 477 1458.3 476.7C1453.4 476.4 1445.1 473.2 1442.5 472.5"/><path d="M1155.8 613.7C1158.5 611.4 1166 604.2 1171.7 600C1177.4 595.8 1183.9 591.3 1190 588.3C1196.1 585.3 1201.9 583.2 1208.3 582C1214.7 580.8 1225 581 1228.3 580.8"/><path d="M1314.2 653.3C1318.8 653.3 1333 654 1341.7 653.3C1350.5 652.6 1359.2 651.1 1366.7 649.2C1374.2 647.3 1381.4 644.4 1386.7 641.7C1392 639.1 1395.5 636.4 1398.3 633.3C1401.1 630.2 1403 626.9 1403.3 623.3C1403.6 619.7 1402.2 615.6 1400 611.7C1397.8 607.8 1395.5 605.6 1390 600C1384.5 594.4 1372 583.6 1366.7 578.3C1361.4 573 1359.7 569.7 1358.3 568"/></g>
<g stroke-linejoin="round"><polygon points="812.8,949.4 865.9,922.8 876.2,972.9 822.3,999.5" fill="rgba(215,225,226,.38)" stroke="#4a5254" stroke-width="1.1"/><polygon points="865.9,922.8 899.4,951 908.5,1000.3 876.2,972.9" fill="rgba(215,225,226,.32)" stroke="#4a5254" stroke-width="1.1"/><polygon points="822.3,999.5 876.2,972.9 908.5,1000.3 856,1028.5" fill="rgba(215,225,226,.28)" stroke="#4a5254" stroke-width="1.1"/><path d="M856 1028.5L840.5 957.2" stroke="rgba(110,200,110,.55)" stroke-width="1"/><path d="M856 1028.5L914 1000.6" stroke="#c0444e" stroke-width="1.6"/><path d="M918.5 998.3L912.5 998.9L914.5 1002.8Z" fill="#c0444e"/><path d="M856 1028.5L821 998.2" stroke="#4c4fd0" stroke-width="1.6"/><path d="M817.8 995.6L820.2 1000.3L823.3 997Z" fill="#4c4fd0"/><text x="0" y="0" transform="translate(830,970) rotate(-27) skewX(-14)" font-size="8.5" fill="#5a6466" style="font-family:'Liberation Sans',sans-serif" textLength="32">FRONT</text><text x="0" y="0" transform="translate(879.5,955) rotate(43) skewX(24)" font-size="6.5" textLength="21" fill="#5a6466" style="font-family:'Liberation Sans',sans-serif">RIGHT</text><text x="0" y="0" transform="translate(885.5,992) rotate(154) skewX(20)" font-size="8" fill="#4a5254" style="font-family:'Liberation Sans',sans-serif" textLength="40">BOTTOM</text><text x="809.5" y="995.5" font-size="11.5" fill="#5558dc" style="font-family:'Liberation Sans',sans-serif">Z</text><text x="921" y="999.5" font-size="11.5" fill="#c4404c" style="font-family:'Liberation Sans',sans-serif">X</text><polygon points="851.3,910.2 870.9,910.2 860.9,900.3" fill="rgba(170,182,184,.55)" stroke="rgba(120,132,134,.8)" stroke-width=".9"/><polygon points="851.3,1041.3 870.9,1041.3 860.9,1050.9" fill="rgba(170,182,184,.55)" stroke="rgba(120,132,134,.8)" stroke-width=".9"/><polygon points="785.3,975.9 795.2,966.6 795.2,985.4" fill="rgba(170,182,184,.55)" stroke="rgba(120,132,134,.8)" stroke-width=".9"/><polygon points="936.2,975.9 926.8,966.6 926.8,985.4" fill="rgba(170,182,184,.55)" stroke="rgba(120,132,134,.8)" stroke-width=".9"/><path d="M791.6 1007.5L799 1015L795.5 1015C796 1027 802 1034 813 1037L813 1041.5C799 1040 790.5 1030 789 1015.5L784 1015.5Z" fill="rgba(170,182,184,.55)" stroke="rgba(120,132,134,.8)" stroke-width=".9"/><path d="M798.5 1041C804 1045 811 1046.5 819.5 1046.5L819 1051L828.5 1045.5L820.5 1038L820 1041.5C813 1041.5 806.5 1040 801.5 1037Z" fill="rgba(170,182,184,.55)" stroke="rgba(120,132,134,.8)" stroke-width=".9"/><path d="M913.5 1040L923 1030.5L932.6 1040H929.5V1048H925V1042.5H921V1048H916.5V1040Z" fill="rgba(225,225,225,.5)" stroke="#a9a9a9" stroke-width="1.2"/></g>
<path d="M1221.5 1038V1042.5H1473.5V1038" fill="none" stroke="#333" stroke-width="1.4"/><rect x="1920" y="131" width="1" height="347" fill="#000"/><rect x="1920" y="478" width="1" height="128" fill="#fff"/></svg>
<span class="t" style="left:1325.2px;top:1048.6px;font-size:12px;letter-spacing:0.19px;color:#444;">0.02 [m]</span>
<div class="abs" style="left:1629px;top:144px;width:250px;height:227px;border:1px solid #b5dbeb;border-radius:3px;background:rgba(248,248,248,.55)"></div>
<i class="ex" style="left:1642px;top:159px"></i><span class="t" style="left:1653.4px;top:157.6px;font-size:11.5px;letter-spacing:-0.83px;color:#5a8fb2;">Scene</span><i class="ex" style="left:1658px;top:178px"></i><span class="t" style="left:1669.4px;top:176.6px;font-size:11.5px;letter-spacing:-0.42px;color:#5a8fb2;">Bike Frame Meshing</span><i class="ex p" style="left:1674px;top:198.5px"></i><svg class="abs" style="left:1688px;top:198.5px" width="13" height="9" viewBox="0 0 13 9"><path d="M.3 4.5C2.5 .6 10.5 .6 12.7 4.5C10.5 8.4 2.5 8.4 .3 4.5Z" fill="#85857d"/><circle cx="6.5" cy="4.5" r="3" fill="#d8d8d2"/><circle cx="6.5" cy="4.5" r="2.3" fill="#5f5f58"/><circle cx="6.5" cy="4.5" r="1" fill="#9a9a92"/></svg><span class="t" style="left:1704.2px;top:196.7px;font-size:11.5px;letter-spacing:-0.49px;color:#5a8fb2;">volumeOnGeoVolumes_0</span><i class="ex" style="left:1658px;top:218px"></i><span class="t" style="left:1670px;top:216.5px;font-size:11.5px;letter-spacing:-0.32px;color:#5a8fb2;">Topological Entity Sets</span>
<svg class="abs" style="left:1694.5px;top:241.8px" width="13" height="9" viewBox="0 0 13 9"><path d="M.3 4.5C2.5 .6 10.5 .6 12.7 4.5C10.5 8.4 2.5 8.4 .3 4.5Z" fill="#85857d"/><circle cx="6.5" cy="4.5" r="3" fill="#d8d8d2"/><circle cx="6.5" cy="4.5" r="2.3" fill="#5f5f58"/><circle cx="6.5" cy="4.5" r="1" fill="#9a9a92"/></svg><span class="t" style="left:1710.9px;top:239.5px;font-size:11.5px;letter-spacing:-0.2px;color:#5a8fb2;">symmetry</span><svg class="abs" style="left:1694.5px;top:267.9px" width="13" height="9" viewBox="0 0 13 9"><path d="M.3 4.5C2.5 .6 10.5 .6 12.7 4.5C10.5 8.4 2.5 8.4 .3 4.5Z" fill="#85857d"/><circle cx="6.5" cy="4.5" r="3" fill="#d8d8d2"/><circle cx="6.5" cy="4.5" r="2.3" fill="#5f5f58"/><circle cx="6.5" cy="4.5" r="1" fill="#9a9a92"/></svg><span class="t" style="left:1711.3px;top:265.6px;font-size:11.5px;letter-spacing:-0.2px;color:#5a8fb2;">wheel fork</span><svg class="abs" style="left:1694.5px;top:294.2px" width="13" height="9" viewBox="0 0 13 9"><path d="M.3 4.5C2.5 .6 10.5 .6 12.7 4.5C10.5 8.4 2.5 8.4 .3 4.5Z" fill="#85857d"/><circle cx="6.5" cy="4.5" r="3" fill="#d8d8d2"/><circle cx="6.5" cy="4.5" r="2.3" fill="#5f5f58"/><circle cx="6.5" cy="4.5" r="1" fill="#9a9a92"/></svg><span class="t" style="left:1710.5px;top:291.9px;font-size:11.5px;letter-spacing:-0.37px;color:#5a8fb2;">pedals</span><svg class="abs" style="left:1694.5px;top:320.2px" width="13" height="9" viewBox="0 0 13 9"><path d="M.3 4.5C2.5 .6 10.5 .6 12.7 4.5C10.5 8.4 2.5 8.4 .3 4.5Z" fill="#85857d"/><circle cx="6.5" cy="4.5" r="3" fill="#d8d8d2"/><circle cx="6.5" cy="4.5" r="2.3" fill="#5f5f58"/><circle cx="6.5" cy="4.5" r="1" fill="#9a9a92"/></svg><span class="t" style="left:1710.5px;top:317.9px;font-size:11.5px;letter-spacing:-0.32px;color:#2a9df4;">back wheel</span><svg class="abs" style="left:1694.5px;top:345.8px" width="13" height="9" viewBox="0 0 13 9"><path d="M.3 4.5C2.5 .6 10.5 .6 12.7 4.5C10.5 8.4 2.5 8.4 .3 4.5Z" fill="#85857d"/><circle cx="6.5" cy="4.5" r="3" fill="#d8d8d2"/><circle cx="6.5" cy="4.5" r="2.3" fill="#5f5f58"/><circle cx="6.5" cy="4.5" r="1" fill="#9a9a92"/></svg><span class="t" style="left:1710.9px;top:343.5px;font-size:11.5px;letter-spacing:-0.58px;color:#5a8fb2;">seat</span><svg class="abs" style="left:1868px;top:360px" width="9" height="9" viewBox="0 0 9 9"><path d="M0 8.5L8.5 0M3.5 8.5L8.5 3.5M6.5 8.5L8.5 6.5" stroke="#777" stroke-width=".8"/></svg>
<div class="abs" style="left:1663px;top:1035px;width:147px;height:33px;background:#0b5c9e;border-radius:3px 3px 0 0"></div><svg class="abs" style="left:1677.5px;top:1042px" width="28" height="19" viewBox="0 0 28 19"><path d="M13.5 .5C6 .5 .5 4 .5 8.8C.5 13.6 6 17 13.5 17C15.5 17 17.5 16.7 19 16.2L25.5 18.5L22.8 14.3C25.2 12.8 26.5 10.9 26.5 8.8C26.5 4 21 .5 13.5 .5Z" fill="#fff"/><path d="M7 5.5H10.3L11.2 4H15.8L16.7 5.5H20V13.5H7Z" fill="#0b5c9e"/><circle cx="13.5" cy="9.5" r="2.7" fill="#fff"/><circle cx="13.5" cy="9.5" r="1.5" fill="#0b5c9e"/></svg><span class="t" style="left:1710.4px;top:1046.4px;font-size:12.5px;letter-spacing:-0.63px;color:#fff;font-weight:bold;">Report an issue</span><div class="abs" style="left:1815px;top:1035px;width:75px;height:33px;background:#0b5c9e;border-radius:3px 3px 0 0"></div><svg class="abs" style="left:1827.5px;top:1044px" width="19" height="16" viewBox="0 0 19 16"><path d="M1 0H17.5Q18.5 0 18.5 1V10.5Q18.5 11.5 17.5 11.5H6L1.5 15.5V11.5H1Q0 11.5 0 10.5V1Q0 0 1 0Z" fill="#fff"/></svg><span class="t" style="left:1854.5px;top:1046.4px;font-size:12.5px;letter-spacing:-0.64px;color:#fff;font-weight:bold;">Chat</span><div class="abs" style="left:1902.5px;top:1041.5px;width:22px;height:28px;border:1px solid #aaa;border-radius:3px;background:#f4f4f4"></div><span class="t" style="left:1909.5px;top:1049.2px;font-size:11px;color:#333;font-weight:bold;">!</span>
</body></html>
